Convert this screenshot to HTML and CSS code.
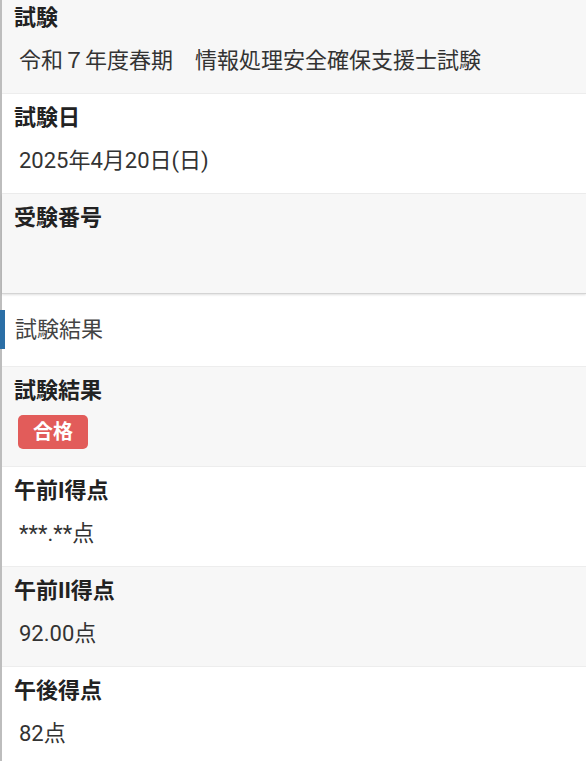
FILE: index.html
```html
<!DOCTYPE html>
<html lang="ja">
<head>
  <meta charset="UTF-8">
  <title>試験結果</title>
  <link rel="stylesheet" href="styles.css">
</head>
<body>

  <div class="result-page">
    <div class="info-row info-row-gray">
      <div class="info-label">試験</div>
      <div class="info-value">令和７年度春期　情報処理安全確保支援士試験</div>
    </div>
    <div class="info-row">
      <div class="info-label">試験日</div>
      <div class="info-value">2025年4月20日(日)</div>
    </div>
    <div class="info-row info-row-gray info-row-last">
      <div class="info-label">受験番号</div>
      <div class="info-value"></div>
    </div>

    <div class="section-title">試験結果</div>

    <div class="info-row info-row-gray">
      <div class="info-label">試験結果</div>
      <div class="info-value"><span class="pass-badge">合格</span></div>
    </div>
    <div class="info-row">
      <div class="info-label">午前I得点</div>
      <div class="info-value">***.**点</div>
    </div>
    <div class="info-row info-row-gray">
      <div class="info-label">午前II得点</div>
      <div class="info-value">92.00点</div>
    </div>
    <div class="info-row">
      <div class="info-label">午後得点</div>
      <div class="info-value">82点</div>
    </div>
  </div>

</body>
</html>
```

FILE: styles.css
```css
body {
  margin: 0;
  background: #fff;
  font-family: Roboto, 'Noto Sans CJK JP', sans-serif;
  color: #222;
}
.result-page {
  margin-top: -6px;
  border-left: 2px solid #bdbdbd;
  min-height: 780px;
}
.info-row {
  height: 100px;
  box-sizing: border-box;
  padding: 9px 0 0 12px;
  border-bottom: 1px solid #ededed;
  background: #fff;
}
.info-row-gray {
  background: #f7f7f7;
}
.info-row-last {
  border-bottom: 1px solid #d4d4d4;
  box-shadow: 0 1px 2px rgba(0, 0, 0, 0.12);
  position: relative;
}
.info-label {
  font-size: 22px;
  font-weight: 700;
  line-height: 30px;
  color: #222;
}
.info-value {
  display: flex;
  align-items: center;
  height: 30px;
  margin-top: 13px;
  padding-left: 5px;
  font-size: 22px;
  line-height: 30px;
  color: #333;
}
.section-title {
  height: 73px;
  box-sizing: border-box;
  display: flex;
  align-items: center;
  padding: 0 0 6px 13px;
  border-bottom: 1px solid #ededed;
  font-size: 22px;
  color: #444;
  position: relative;
}
.section-title::before {
  content: '';
  position: absolute;
  left: -2px;
  top: 16px;
  width: 5px;
  height: 39px;
  background: #2b6fa6;
}
.pass-badge {
  display: inline-flex;
  align-items: center;
  justify-content: center;
  width: 70px;
  height: 34px;
  margin: -4px 0 0 -1px;
  border-radius: 5px;
  background: #e25c5a;
  color: #fff;
  font-size: 20px;
  font-weight: 700;
}
```
